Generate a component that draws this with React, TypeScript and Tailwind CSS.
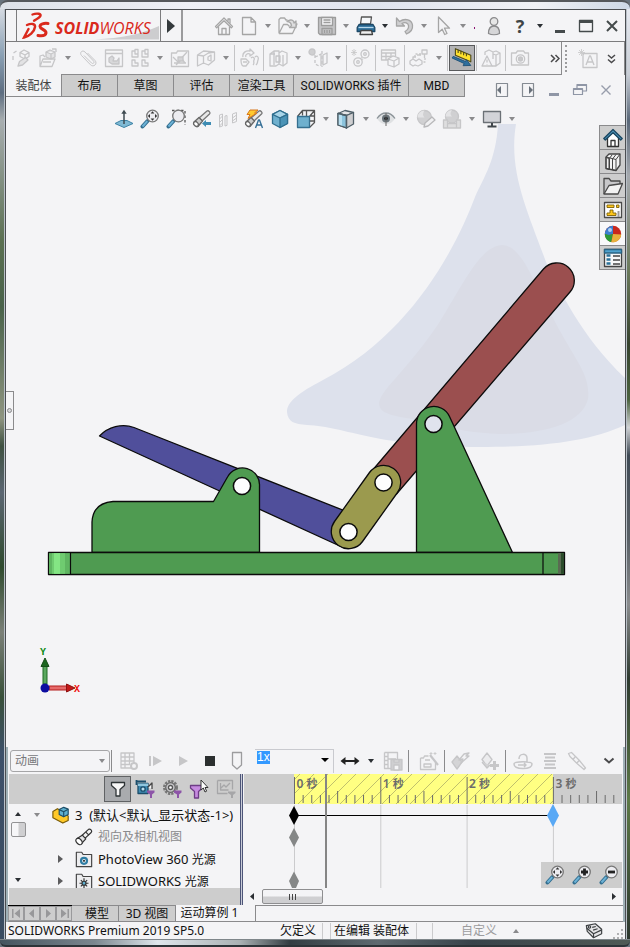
import React from "react";

type IconProps = { className?: string };
type Draw = (p: IconProps) => React.ReactElement;

const LIGHT = "#c6c6c8";

function Svg({
  children,
  w = 20,
  stroke = LIGHT,
  fill = "none",
}: {
  children: React.ReactNode;
  w?: number;
  stroke?: string;
  fill?: string;
}) {
  return (
    <svg
      aria-hidden="true"
      width={w}
      height={w}
      viewBox="0 0 20 20"
      fill={fill}
      stroke={stroke}
      strokeWidth="1.3"
      strokeLinejoin="round"
      className="shrink-0"
    >
      {children}
    </svg>
  );
}

/* ---------- title bar icons ---------- */
const HomeGray: Draw = () => (
  <Svg stroke="#a5a5a5">
    <path d="M1.5 10.500 10 2l8.500 8.500-1.200 1.200L10 4.800l-7.300 6.900z" />
    <path d="M4.500 10.500V18.500h11V10.500M8 18.500v-6h4v6M14 5.500V3h2v4.500" />
  </Svg>
);
const NewDoc: Draw = () => (
  <Svg stroke="#a5a5a5">
    <path d="M3.500 1.500h8.500l4.500 4.500v12.500h-13zM12 1.500V6h4.500" />
  </Svg>
);
const OpenDoc: Draw = () => (
  <Svg stroke="#a9a9a9">
    <path d="M1 17.500V3.500l1.500-1.500h4l1.500 2h1.500M1 17.500 5.500 8.500h4l2 2M1 17.500h13.500L19 8h-2" />
    <path d="M9 5.500c4-3 7-1 7 1.500l2-2v6.500h-6.500l2-2C13 7 11.500 5.500 9 5.500z" fill="#dededf" />
  </Svg>
);
const SaveIcon: Draw = () => (
  <Svg stroke="#9c9c9c">
    <path d="M1.500 1.500h17v17H3l-1.500-1.500z" fill="#c4c4c6" />
    <path d="M4.500 1.500h11v8h-11z" fill="#f4f4f6" />
    <path d="M6.500 4h7M6.500 6.500h7" />
    <path d="M5 12.500h10v6H5zM7.500 14v3M10 14v3M12.500 14v3" />
  </Svg>
);
const PrintIcon: Draw = () => (
  <Svg stroke="#1c4765">
    <path d="M5.500 1h10l-1 7H4.500z" fill="#f6f8fa" stroke="#555" />
    <path d="M3 8.500h14l1.800 3v4H1.200v-4z" fill="#2a6d98" />
    <path d="M2.500 11.500h15" stroke="#b7d7ea" />
    <path d="M5 14.500h10.500l1 4H4z" fill="#f0f0f0" stroke="#444" />
  </Svg>
);
const UndoIcon: Draw = () => (
  <Svg stroke="#a5a5a5">
    <path
      d="M1.500 2v8h8L7 7.500c3-1.800 6-.5 6.500 2 .5 2.500-1 4.500-3.500 6L11.500 18c4.500-2 6.500-5 6-9-.8-5-7-7.500-13-3.500z"
      fill="#cfcfd1"
    />
  </Svg>
);
const CursorIcon: Draw = () => (
  <Svg stroke="#a5a5a5">
    <path d="M4.500 1v15.500l3.700-3.300 2.500 5.300 2.300-1-2.500-5.300h5z" />
  </Svg>
);
const UserIcon: Draw = () => (
  <Svg stroke="#8a8a8c">
    <circle cx="10" cy="5.500" r="3.800" fill="#e6e6e6" />
    <path d="M4.500 17.500c0-5 1.500-7.500 5.500-7.500s5.500 2.500 5.500 7.500c-3 1.500-8 1.500-11 0z" fill="#d6d6d8" />
  </Svg>
);
const MinIcon: Draw = () => (
  <Svg stroke="none" fill="#454b4c">
    <path d="M5 14h10v3H5z" />
  </Svg>
);
const MaxIcon: Draw = () => (
  <Svg stroke="#454b4c">
    <path d="M3.500 4.500h13v11h-13z" />
    <path d="M3 5.500h14" strokeWidth="3" />
  </Svg>
);
const CloseIcon: Draw = () => (
  <Svg stroke="#454b4c">
    <path d="m5 5 10 10M15 5 5 15" strokeWidth="2" />
  </Svg>
);

/* ---------- command manager icons ---------- */
const EditPart: Draw = () => (
  <Svg>
    <path d="M1.500 5l3-2M1 8v4M8 4.500l4-2.500 5 2.500v4l-4 2.500-5-2.500zM8 4.500l5 2.500 4-2.500M13 7v4" />
    <path d="m6 18 1.500-4.500 6-4 2.500 2.500-5.500 5z" fill="#e2e2e4" />
  </Svg>
);
const InsertComp: Draw = () => (
  <Svg>
    <path d="M2 18.500 5 11h12l-3 7.500zM2 18V8l3-1 2 2" />
    <path d="m8 4 4-2 5 2v5l-4 2-5-2zM8 4l5 2 4-2M13 6v5" fill="#e4e4e6" />
    <path d="M5 14h8M14 1h4v3" />
  </Svg>
);
const ClipIcon: Draw = () => (
  <Svg>
    <path
      d="M6 7.500 13.500 15c1.500 1.500 3.500-.5 2-2L7 4C4.500 1.500 1 4.500 3.500 7.500l9 9.300c3 3 7.500-1 4.500-4.300L9.500 5"
      strokeWidth="1"
    />
  </Svg>
);
const WindowMate: Draw = () => (
  <Svg>
    <path d="M1.500 2h17v16.500h-17zM1.500 5.500h17" />
    <path d="M5 10l3-2 2 2-1 3h4l2-3v6H8l-3-2z" fill="#d8d8da" />
  </Svg>
);
const PatternIcon: Draw = () => (
  <Svg>
    <path d="M2 3h3v3h3v3H2zM12 3h3v3h3v3h-6zM2 12h3v3h3v3H2zM12 12h3v3h3v3h-6zM5 3V1.500h3V6M15 3V1.500h3V6" />
  </Svg>
);
const ChartMate: Draw = () => (
  <Svg>
    <path d="M1.500 5h5l1-2h11v15.500h-17z" />
    <path d="m3 9 5 5L17 4M4 15h12M6 17l6-6 3 4" />
    <path d="M8 9h5v4H8z" fill="#d4d4d6" />
  </Svg>
);
const MoveComp: Draw = () => (
  <Svg>
    <path d="m1.500 7 6-4 11 1v8l-6 5-5-2-6 3zM7.500 8v8M1.500 7l6 1 5-3 6-1M12 9l3-2v6l-3-1z" />
  </Svg>
);
const RotateComp: Draw = () => (
  <Svg>
    <path d="M4 9c-1-4 3-7 7-6V1l4 4-4 3V6C8 5 6 7 7 9M2 11h5l3 3-3 4H4c-2-1-2-3-2-7zM4 14h4M12 10c2-2 4 0 3 2s1 3-1 5M16 9c2-2 4 0 3 3s0 3-2 5" />
  </Svg>
);
const AssemblyFeat: Draw = () => (
  <Svg>
    <path d="M2 6l4-3h5v13l-3 2H2zM6 3v14M11 5l3-2 5 2v10l-4 3-4-2M15 7v10M2 6h5M8 8h4v6H8z" />
  </Svg>
);
const RefGeom: Draw = () => (
  <Svg>
    <circle cx="4" cy="4" r="3" fill="#cfcfd1" />
    <path d="M7 7v9l4 2M7 9l5-2M14 3v16" strokeDasharray="3 2" />
    <path d="m11 7 2-1v12M15 7l4-2v10l-4 2z" />
  </Svg>
);
const GearsIcon: Draw = () => (
  <Svg>
    <circle cx="14" cy="6" r="4" />
    <circle cx="14" cy="6" r="1.300" />
    <circle cx="7" cy="14" r="4.200" />
    <circle cx="7" cy="14" r="1.300" />
    <path d="M3 1v7M0 4.500h6M1 2l4 5M5 2 1 7M10 9l2 3" strokeWidth=".8" />
  </Svg>
);
const TableIcon: Draw = () => (
  <Svg>
    <path d="M1.500 2h14v10h-14zM1.500 5h14M1.500 8.500h14M6 5v7M11 5v7" />
    <path d="m8 11 5-3 6 2v6l-5 3-6-2zM8 11l6 2v6M14 13l5-3" fill="#f4f4f6" />
  </Svg>
);
const ExplodeIcon: Draw = () => (
  <Svg>
    <path d="M13 2h5v4h-5zM15.500 6v4M1 13l3-2 3 2 3-2 3 2v3l-4 2-3-1-2 1-3-2zM4 11V9h3M8 7h4" />
    <path d="M6 9V6h6M16 10v4h-3" strokeDasharray="2 1.500" />
  </Svg>
);
const RulerIcon: Draw = () => (
  <Svg w={22} stroke="#4f4a1a">
    <path d="m4 1.500 14 6v6l-14-6z" fill="#ffe12e" strokeWidth="1" />
    <path d="M6.500 2.500v3M9 3.500v3M11.500 4.500v3M14 5.500v3" strokeWidth="1" />
    <path d="m1 10 11 5-1 2 7-.2-4-5.300-.8 1.700L2 8.500z" fill="#2e6f9e" stroke="#1e4e73" strokeWidth=".8" />
  </Svg>
);
const WarnPart: Draw = () => (
  <Svg>
    <path d="M4 7V4l4-2 4 2 3-1 4 2v10l-4 3h-4M12 4v7M15 7v11M12 6l3 1 4-2" />
    <path d="m6 8 5 10H1zM6 11.500v3M6 16v.6" fill="#f4f4f6" />
  </Svg>
);
const CameraIcon: Draw = () => (
  <Svg>
    <path d="M1.500 5H6l1.500-2h6L15 5h3.500v12h-17z" />
    <circle cx="10.500" cy="11" r="4.200" />
    <circle cx="10.500" cy="11" r="2" fill="#c9c9cb" />
  </Svg>
);
const AnnotateIcon: Draw = () => (
  <Svg>
    <path d="M5 4.500h14v14H5zM8 16l3.500-9h1L16 16M9.500 13h5" />
    <path d="M3.500 0v7M0 3.500h7M1 1l5 5M6 1 1 6" strokeWidth=".8" />
  </Svg>
);

/* ---------- document window controls ---------- */
const PaneLeft: Draw = () => (
  <Svg stroke="#858b93">
    <path d="M4.500 3.500h11v13h-11z" strokeWidth="1.200" />
    <path d="M9 6v8l-4-4z" fill="#68707a" stroke="none" />
  </Svg>
);
const PaneRight: Draw = () => (
  <Svg stroke="#858b93">
    <path d="M4.500 3.500h11v13h-11z" strokeWidth="1.200" />
    <path d="M11 6v8l4-4z" fill="#68707a" stroke="none" />
  </Svg>
);
const DocMin: Draw = () => (
  <Svg stroke="none" fill="#8f96a6">
    <path d="M5 13h10v3H5z" />
  </Svg>
);
const DocRestore: Draw = () => (
  <Svg stroke="#8f96a6">
    <path d="M3.500 8.500h9v6h-9zM3.500 9.500h9M7 8V4.500h9.500V11H13M7 5.500h9" strokeWidth="1.200" />
  </Svg>
);
const DocClose: Draw = () => (
  <Svg stroke="#979dab">
    <path d="m5.500 5.500 9 9M14.500 5.500l-9 9" strokeWidth="1.400" />
  </Svg>
);

/* ---------- heads-up view icons ---------- */
const NormalTo: Draw = () => (
  <Svg stroke="#3d83a6">
    <path d="m1 14.500 6-3h6l6 3-9 4z" fill="#7fb9d4" strokeWidth="1" />
    <path d="M10 15V3" stroke="#3e4a50" strokeWidth="1.500" />
    <path d="M7.300 4.800 10 .8l2.700 4z" fill="#3e4a50" stroke="none" />
  </Svg>
);
function Lens({ children, dash }: { children?: React.ReactNode; dash?: boolean }) {
  return (
    <Svg stroke="#555">
      {dash && <path d="M6 1.500h13V16" strokeDasharray="2.500 2" stroke="#555" />}
      <path d="m2.500 17.500 5-5.500" stroke="#346f90" strokeWidth="4" strokeLinecap="round" />
      <path d="m2.500 17.500 4.800-5.300" stroke="#6cb2d6" strokeWidth="2" />
      <circle cx="12.500" cy="7" r="5.800" fill="#ececf0" stroke="#777" />
      {children}
    </Svg>
  );
}
const ZoomFit: Draw = () => (
  <Lens>
    <path
      d="m12.500 2.300 1.900 2.200h-3.800zM12.500 11.700l1.900-2.200h-3.800zM7.800 7 10 5.100v3.800zM17.200 7 15 5.100v3.800z"
      fill="#333"
      stroke="none"
    />
  </Lens>
);
const ZoomArea: Draw = () => <Lens dash />;
const ZoomIn: Draw = () => (
  <Lens>
    <path d="M12.500 3.500v7M9 7h7" stroke="#222" strokeWidth="2.800" />
  </Lens>
);
const ZoomOut: Draw = () => (
  <Lens>
    <path d="M9 7h7" stroke="#222" strokeWidth="2.800" />
  </Lens>
);
const Scope = () => (
  <>
    <path d="m7 9 8-7c1.500-1 4 1.500 2.500 3L10 12z" fill="#e8e8e8" stroke="#777" />
    <path d="m2 13 5-4.500 3.500 3.500L6 17.500c-2 1-5-2-4-4.500z" fill="#ccc" stroke="#666" />
    <ellipse cx="4" cy="15" rx="2" ry="2.600" transform="rotate(-45 4 15)" fill="#fff" stroke="#666" />
  </>
);
const PrevView: Draw = () => (
  <Svg>
    <Scope />
    <path d="m10 14.500 4-3.500v2h5v3h-5v2z" fill="#3e8cb3" stroke="none" />
  </Svg>
);
const SectionView: Draw = () => (
  <Svg>
    <path
      d="M1.500 6l3-1v12l-3 1zM1.500 10l3-3M1.500 13.500l3-3M1.500 17l3-3M7 7v10l2-.6V6.500zM14.500 5l4-1.500v9l-4 1.500zM14.500 9l4-3M14.500 12l4-3"
      strokeWidth="1"
    />
  </Svg>
);
const Dynamic: Draw = () => (
  <Svg>
    <Scope />
    <path d="M6 1h8l-3.500 3H13L4 9.500 6 5.500H3z" fill="#ffc92e" stroke="#d7771c" strokeWidth="1" />
    <path d="m11.500 19 3-8h1l3 8M12.800 16h4.500" stroke="#356f96" strokeWidth="1.400" />
  </Svg>
);
const CubeIcon: Draw = () => (
  <Svg stroke="#2f6f8f">
    <path d="m10 1.500 7.500 3.800v9.200L10 18.500l-7.500-4V5.300z" fill="#6fb0ce" />
    <path d="m10 1.500 7.500 3.800L10 9 2.500 5.300z" fill="#a9d5e8" />
    <path d="M10 9v9.500l7.500-4V5.300z" fill="#4b93b6" />
  </Svg>
);
const ViewOrient: Draw = () => (
  <Svg stroke="#555">
    <path d="m1.500 7.500 5-6h12v12l-5 5M13.500 7.500l5-6M6.500 1.500v5M10.500 1.500V7M18 7h-4M18 12h-4" />
    <path d="M1.500 7.500h12v11h-12z" fill="#6fb0ce" stroke="#356f8f" />
  </Svg>
);
const DisplayStyle: Draw = () => (
  <Svg stroke="#4f5f68">
    <path d="m2 4.500 7-3 8.500 2-7 3z" fill="#e4e4e6" />
    <path d="m2 4.500 8.500 2v12.500L2 16z" fill="#8cc4dd" />
    <path d="m2 4.500 4 1v12L2 16z" fill="#b8dff0" stroke="none" />
    <path d="m10.500 6.500 7-3V15l-7 4z" fill="#cfcfd1" />
    <path d="m2 4.500 8.500 2v12.500L2 16z" />
  </Svg>
);
const EyeIcon: Draw = () => (
  <Svg stroke="#8b9398">
    <path d="M1 9.500C4 5 6.500 4 10 4s6 1 9 5.500c-3 4.500-5.500 5.500-9 5.500S4 14 1 9.500z" fill="#dfe1e3" stroke="none" />
    <path d="M1 9.500C4 5 6.500 4 10 4s6 1 9 5.500" />
    <circle cx="10" cy="9.500" r="4" fill="#6b757b" stroke="none" />
    <circle cx="10" cy="9.500" r="1.800" fill="#15191c" stroke="none" />
    <path d="M10 4v13" stroke="#666" strokeWidth="1" />
  </Svg>
);
const BallPencil: Draw = () => (
  <Svg>
    <circle cx="8.500" cy="8.500" r="7" fill="#d0d0d2" />
    <path d="M8.500 1.500c-2 3-2 5 0 7H1.500a7 7 0 0 1 7-7z" fill="#e4e4e6" stroke="none" />
    <path d="m8 18 1-4 7-6 3 3-7 6z" fill="#f0f0f2" stroke="#b8b8ba" />
  </Svg>
);
const BallScene: Draw = () => (
  <Svg>
    <circle cx="10" cy="7.500" r="6.500" fill="#d0d0d2" />
    <path d="M10 1c-2 3-2 4.500 0 6.500H3.500A6.500 6.500 0 0 1 10 1z" fill="#e4e4e6" stroke="none" />
    <path d="M1.500 11h4v8h-4zM14.500 11h4v8h-4zM5.500 14.500h9V19h-9z" fill="#dededf" />
  </Svg>
);
const MonitorIcon: Draw = () => (
  <Svg stroke="#6b7076">
    <path d="M1.500 2.500h17v11h-17z" fill="#d2d3d8" />
    <path d="M10 14v3M5.500 17.500h9" stroke="#40464b" strokeWidth="2" />
  </Svg>
);

/* ---------- task pane icons ---------- */
const TaskHome: Draw = () => (
  <Svg stroke="#333">
    <path d="M4.500 9v9.500h11V9L10 4z" fill="#fff" />
    <path d="M8 18.500v-6h4v6" />
    <path d="M.8 10.500 10 1.500l9.200 9-1.500 1.500L10 4.800 2.300 12z" fill="#4a92b8" stroke="#1b4660" />
  </Svg>
);
const TaskLibrary: Draw = () => (
  <Svg stroke="#444">
    <path d="m3 5 3-3 11 0v11l-4 5.500-10-2z" fill="#f2f2f2" />
    <path
      d="M3 5v11.500l3 1V7zM6 7l3-4M6.500 7v10.500M9.500 7v11l3.500.5V7.500L17 2M9.500 7l3.500-4.500M3 5l10 2.500"
      strokeWidth="1"
    />
  </Svg>
);
const TaskFolder: Draw = () => (
  <Svg stroke="#4a4a4a">
    <path d="M1 18V2.500h5L8 5h9v3" fill="#c8c8ca" />
    <path d="M1 18 6 9.500l13.500-2L15 18z" fill="#f2f2f2" />
  </Svg>
);
const TaskPalette: Draw = () => (
  <Svg stroke="#4a4a4a">
    <path d="M1.500 2.500h17v15h-17z" fill="#fff" />
    <path d="M4 5h7v2.500H4zM13.500 5H16v2.500h-2.500zM7 10h3v3h3v2.500H4V13h3z" fill="#ffc61a" stroke="#7d6208" strokeWidth=".9" />
    <path d="M14.500 11h2v6h-2z" fill="#9a9a9c" stroke="none" />
  </Svg>
);
const TaskBall: Draw = () => (
  <Svg stroke="none">
    <circle cx="10" cy="10" r="8.200" fill="#c9281e" />
    <path d="M10 10V1.800A8.200 8.200 0 0 0 1.800 10L5 11.500z" fill="#3c7fd0" />
    <path d="M1.800 10c0 4 2.500 7.200 6.500 8.200L10 10l-4 1z" fill="#2c9a38" />
    <path d="M8.300 18.200c5 1 9.700-3 9.900-7.700L10 10z" fill="#e8b13c" />
    <circle cx="7" cy="6" r="2" fill="#cfe4fa" opacity=".8" />
  </Svg>
);
const TaskProps: Draw = () => (
  <Svg stroke="#444">
    <path d="M1.500 1.500h17v17h-17z" fill="#f8f8f8" />
    <path d="M1.500 1.500h17V5h-17z" fill="#4fa3cf" stroke="#2a6383" />
    <path d="M3.500 7.500h4M3.500 11.500h4M3.500 15.500h4" stroke="#2a7199" strokeWidth="2.400" />
    <path d="M10 8h7M10 12h7M10 16h7" />
  </Svg>
);

/* ---------- motion manager icons ---------- */
const CalcIcon: Draw = () => (
  <Svg>
    <path d="M2 2h13v15H2zM2 6h13M2 10h13M2 13.500h9M6 2v15M10.500 2v12" />
    <circle cx="15" cy="15" r="3" fill="#f4f4f6" strokeWidth="2" />
  </Svg>
);
const PlayStart: Draw = () => (
  <Svg stroke="none" fill="#c6c6c8">
    <path d="M3 5h2v10H3zM7 5l9 5-9 5z" />
  </Svg>
);
const PlayIcon: Draw = () => (
  <Svg stroke="none" fill="#c6c6c8">
    <path d="m6 5 9 5-9 5z" />
  </Svg>
);
const StopIcon: Draw = () => (
  <Svg stroke="none" fill="#2b2f2f">
    <path d="M5 5h10v10H5z" />
  </Svg>
);
const SliderKnob: Draw = () => (
  <Svg stroke="#9c9c9e">
    <path d="M5.500 1.500h9V14L10 18l-4.500-4z" />
  </Svg>
);
const LoopArrow: Draw = () => (
  <Svg stroke="#222">
    <path d="M3 10h14" strokeWidth="2" />
    <path d="M.5 10 5.500 6v8zM19.500 10l-5-4v8z" fill="#222" stroke="none" />
  </Svg>
);
const SaveAnim: Draw = () => (
  <Svg>
    <path d="M1.500 1.500h13V8M1.500 1.500v16H8M5 1.500v16M1.500 5.500H5M1.500 9.500H5M1.500 13.500H5M5 8h8" />
    <path d="M8 8.500h11V19H8z" fill="#cfcfd1" />
    <path d="M11 14h5v5h-5zM11 9h5v2h-5z" fill="#f4f4f6" />
  </Svg>
);
const WizardIcon: Draw = () => (
  <Svg>
    <path d="M1.500 7V18.500h15V11M1.500 7h3l1-2h4M5 13h7v3H5zM6 9h5" />
    <path d="M12 1v3M10.500 2.500h3M16 1v3M14.500 2.500h3" strokeWidth=".8" />
    <path d="m11 4 8 10" strokeWidth="2.200" />
  </Svg>
);
const KeyAuto: Draw = () => (
  <Svg>
    <path d="m6 5 5 6-5 7-5-7z" fill="#d4d4d6" />
    <path d="m8 9 5-6 5-1-3 3h3l-8 7 2-4z" fill="#f4f4f6" />
  </Svg>
);
const KeyAdd: Draw = () => (
  <Svg>
    <path d="m7 2 5 6.500L7 15 2 8.500z" fill="#ececee" />
    <path d="M2 11l5 6 3-3" fill="#d4d4d6" />
    <path d="M14.500 10v9M10 14.500h9" strokeWidth="3" />
  </Svg>
);
const MotorIcon: Draw = () => (
  <Svg>
    <path d="M1 13c0-3 18-3 18 0s-2 4.500-9 4.500S1 16 1 13zM5 14h8l-2-2M13 14l-2 2M6 8c0-6 8-6 8-1v4" strokeWidth="1.500" />
  </Svg>
);
const SpringIcon: Draw = () => (
  <Svg>
    <path d="M4 3h12M5 6.500h10M4 10h12M5 13.500h10M4 17h12" strokeWidth="2" />
  </Svg>
);
const DamperIcon: Draw = () => (
  <Svg>
    <path d="m1.500 2.500 3-1L12 9l6.500 8-1.500 1.500L9.500 12 3 5.500zM8 6 6 8.500M12 9.500 10 12" />
  </Svg>
);
const FunnelActive: Draw = () => (
  <Svg stroke="#2e3436">
    <path d="M3.500 3.500h13v3l-4.500 4V17H8v-6.500l-4.500-4z" fill="#f6f6f6" />
  </Svg>
);
const Funnel = () => (
  <path d="M12 11.500h7.500v2l-2.500 2V19h-2v-3.500l-3-2z" fill="#8d55a8" stroke="none" />
);
const FilterAnim: Draw = () => (
  <Svg stroke="#1c4e6b">
    <path d="M3 4.500h10v10H3z" fill="#3f8cb3" />
    <path d="M3 4.500h10v2.500H3z" fill="#8fc6de" stroke="none" />
    <path d="M13 8l4-4v6" fill="#f4f4f6" stroke="#444" />
    <circle cx="8" cy="10" r="2.200" fill="#b9deef" />
    <path d="M1.500 1v5M1 2.500h10" stroke="#1c4e6b" strokeWidth="1.800" />
    <Funnel />
  </Svg>
);
const FilterDrive: Draw = () => (
  <Svg stroke="#777">
    <circle cx="8.500" cy="8.500" r="6.300" strokeWidth="2.400" strokeDasharray="2.300 1" />
    <circle cx="8.500" cy="8.500" r="4.800" fill="#c4c4c6" stroke="#666" />
    <circle cx="8.500" cy="8.500" r="2" fill="#fff" stroke="#555" />
    <Funnel />
  </Svg>
);
const FilterSelected: Draw = () => (
  <Svg stroke="#6e3d86">
    <path d="M1.500 6.500h12v2.500l-4 3.500V19h-4v-6.500l-4-3.500z" fill="#c68be0" />
    <path d="M12 1v10l2.300-2 1.700 4 1.600-.8L16 8.500h3z" fill="#fff" stroke="#333" strokeWidth="1" />
  </Svg>
);
const FilterResults: Draw = () => (
  <Svg stroke="#a6a6a8">
    <path d="M1.500 1.500h15v9M1.500 1.500v13h10M4.500 4v7h8M5 9l3-3 2 2 4-4" />
    <path d="M12 12.500h7.500v1.500l-2.500 2v3h-2v-3l-3-2z" fill="#a6a6a8" stroke="none" />
  </Svg>
);

/* ---------- tree icons ---------- */
const AssemblyIcon: Draw = () => (
  <Svg stroke="#7a5c08" w={18}>
    <path d="m1 6 5-3 4 2v5l5-1 3 2v5l-6 3-11-6z" fill="#ffc928" />
    <path d="m8 4 5-2.500 5 2v6L13 12l-5-2.500z" fill="#5fb0d0" stroke="#1e4f68" />
    <path d="M8 4l5 2.300L18 3.500M13 6.300V12" stroke="#1e4f68" />
  </Svg>
);
const ScopeIcon: Draw = () => (
  <Svg stroke="#333" w={18}>
    <path d="m8 8 7-6.500c2-1 4.500 1.500 3 3.500l-7 6.500z" fill="#f2f2f2" />
    <path d="m2 12 6-4 4 4-5 5.500" fill="#e4e4e6" />
    <ellipse cx="4.500" cy="15" rx="2.800" ry="4" transform="rotate(-45 4.500 15)" fill="#fff" />
    <path d="m12 4.500 3.500 3.500" />
  </Svg>
);
function FolderBox({ children }: { children: React.ReactNode }) {
  return (
    <Svg stroke="#444" w={18}>
      <path d="M1.500 18.500V2.500h6L9 5h9.500v13.500z" fill="#ededef" />
      {children}
    </Svg>
  );
}
const PhotoFolder: Draw = () => (
  <FolderBox>
    <circle cx="10" cy="12" r="3.300" fill="#fff" stroke="#2e7ca3" strokeWidth="2.500" />
    <circle cx="10" cy="12" r="1.200" fill="#333" stroke="none" />
  </FolderBox>
);
const LightFolder: Draw = () => (
  <FolderBox>
    <path d="M10 7v11M5 12.500h10M6.500 9l7 7M13.500 9l-7 7" stroke="#333" />
    <circle cx="10" cy="12.500" r="2.200" fill="#5fb0d0" stroke="#333" />
  </FolderBox>
);
const TagIcon: Draw = () => (
  <Svg stroke="#3d4043" w={18}>
    <path d="m1.500 4 10-2 7 6v5l-9 4.500-7-7z" fill="#e4e4e6" />
    <path d="m2 7 7.500 6L18 9M9.500 13v4" />
    <circle cx="5" cy="5.500" r="1.300" />
    <path d="m8 6 4-1M9 9l5-1.500" />
  </Svg>
);

/* ---------- small parts ---------- */
function Caret({ dark, up }: { dark?: boolean; up?: boolean }) {
  return (
    <span className="flex w-[14px] shrink-0 items-center justify-center">
      <svg aria-hidden="true" width="6" height="4" viewBox="0 0 6 4" fill={dark ? "#2b2f33" : "#8a8a8c"}>
        <path d={up ? "M0 4h6L3 0z" : "M0 0h6L3 4z"} />
      </svg>
    </span>
  );
}
function Tool({ icon: I, label, w = "w-[26px]" }: { icon: Draw; label: string; w?: string }) {
  return (
    <button aria-label={label} className={`flex h-full shrink-0 items-center justify-center ${w}`}>
      <I />
    </button>
  );
}
const Sep = () => <span className="mx-px h-[26px] w-px shrink-0 self-center bg-[#c4c4c6]" />;

function TitleBar() {
  return (
    <header className="flex h-8 items-stretch border-b border-[#7c7c7e]">
      <div className="w-[11px] border-r border-[#7c7c7e]" />
      <div className="relative flex w-36 items-center border-r border-[#7c7c7e] pl-[5px]">
        <svg aria-hidden="true" viewBox="0 0 143 31" className="absolute inset-0 h-full w-full">
          <path d="M78 29.500C105 28 125 24 142 16v13.500z" fill="#cdcdcf" />
        </svg>
        <svg aria-hidden="true" width="28" height="28" viewBox="0 0 28 28" className="relative shrink-0" fill="none" stroke="#da291c" strokeLinecap="round">
          <path d="M10.500 2.500c4-1.500 9-1 8 1.200-.8 1.800-3.500 3.300-6.500 5" strokeWidth="2.400" />
          <path d="M5 13c4-1.800 8.500-1.500 8 2C12.500 19.500 7 24.500 2 25.500L6.500 17" strokeWidth="2.400" />
          <path d="M26 11.500c-4-.5-8 .5-8 3s6.500 3.500 6 6.500c-.4 2.600-4.500 3-8 2.500" strokeWidth="3" />
        </svg>
        <span className="relative mt-1 ml-[5px] whitespace-nowrap font-['Open_Sans',sans-serif] text-base leading-5 font-bold text-[#da291c] italic">
          SOLID<span className="font-normal">WORKS</span>
        </span>
      </div>
      <button aria-label="展开菜单" className="flex w-[22px] shrink-0 items-center justify-center border-r-2 border-[#9a9a9c]">
        <svg aria-hidden="true" width="8" height="14" viewBox="0 0 8 14" fill="#343a3c">
          <path d="M0 0v14l8-7z" />
        </svg>
      </button>
      <nav aria-label="标准工具" className="ml-7 flex flex-1 items-center">
        <Tool icon={HomeGray} label="主页" w="w-[25px]" />
        <Tool icon={NewDoc} label="新建" w="w-[25px]" />
        <Caret />
        <Tool icon={OpenDoc} label="打开" w="w-[25px]" />
        <Caret />
        <Tool icon={SaveIcon} label="保存" w="w-[25px]" />
        <Caret />
        <Tool icon={PrintIcon} label="打印" w="w-[25px]" />
        <Caret dark />
        <Tool icon={UndoIcon} label="撤销" w="w-[25px]" />
        <Caret />
        <Tool icon={CursorIcon} label="选择" w="w-[25px]" />
        <Caret />
        <span className="mx-1 mt-1 h-0.5 w-px bg-[#8a1070]" />
      </nav>
      <div className="flex items-center">
        <Tool icon={UserIcon} label="登录" />
        <button aria-label="帮助" className="w-[26px] font-['Open_Sans',sans-serif] text-lg leading-5 font-bold text-[#3f4546]">
          ?
        </button>
        <Caret dark />
        <Tool icon={MinIcon} label="最小化" />
        <Tool icon={MaxIcon} label="最大化" />
        <Tool icon={CloseIcon} label="关闭" />
      </div>
    </header>
  );
}

function CommandBar() {
  return (
    <div className="flex h-[33px] items-stretch">
      <div className="flex flex-1 items-center border-r border-b border-[#8a8a8c] pl-[3px]">
        <Tool icon={EditPart} label="编辑零部件" />
        <Tool icon={InsertComp} label="插入零部件" />
        <Caret />
        <Tool icon={ClipIcon} label="配合" />
        <Tool icon={WindowMate} label="零部件预览" />
        <Tool icon={PatternIcon} label="线性阵列" />
        <Caret />
        <Tool icon={ChartMate} label="智能扣件" />
        <Tool icon={MoveComp} label="移动零部件" />
        <Caret />
        <Sep />
        <Tool icon={RotateComp} label="显示隐藏" />
        <Sep />
        <Tool icon={AssemblyFeat} label="装配体特征" />
        <Caret />
        <Tool icon={RefGeom} label="参考几何体" />
        <Caret />
        <Sep />
        <Tool icon={GearsIcon} label="新建运动算例" />
        <Sep />
        <Tool icon={TableIcon} label="材料明细表" />
        <Sep />
        <Tool icon={ExplodeIcon} label="爆炸视图" />
        <Caret />
        <Sep />
        <button aria-label="Instant3D" aria-pressed="true" className="flex h-[26px] w-[26px] shrink-0 items-center justify-center border border-[#58595b] bg-[#b3b3b5]">
          <RulerIcon />
        </button>
        <Sep />
        <Tool icon={WarnPart} label="更新" />
        <Sep />
        <Tool icon={CameraIcon} label="快照" />
        <button aria-label="更多" className="ml-auto flex w-3 items-center justify-center">
          <svg aria-hidden="true" width="10" height="9" viewBox="0 0 10 9" fill="none" stroke="#4a4a4c" strokeWidth="1.500">
            <path d="m1 1 3.500 3.500L1 8M5.500 1 9 4.500 5.500 8" />
          </svg>
        </button>
      </div>
      <div className="flex w-[63px] items-center border-r border-[#8a8a8c]">
        <span className="ml-[3px] h-[27px] w-0 border-l-2 border-dotted border-[#9c9c9e]" />
        <span className="ml-2">
          <Tool icon={AnnotateIcon} label="注释" />
        </span>
        <button aria-label="展开" className="ml-1 flex w-3 items-center justify-center">
          <svg aria-hidden="true" width="9" height="10" viewBox="0 0 9 10" fill="none" stroke="#4a4a4c" strokeWidth="1.500">
            <path d="M1 1l3.500 3L8 1M1 5.500l3.500 3 3.500-3" />
          </svg>
        </button>
      </div>
    </div>
  );
}

const inactiveTab = "border-l border-b border-[#8a8a8c] bg-[#cdcdcd]";
const TABS = [
  { name: "装配体", cls: "w-[55px] relative -mt-px border-b border-[#8a8a8c] bg-[#f4f4f6] text-[#444]" },
  { name: "布局", cls: `w-14 ${inactiveTab}` },
  { name: "草图", cls: `w-14 ${inactiveTab}` },
  { name: "评估", cls: `w-14 ${inactiveTab}` },
  { name: "渲染工具", cls: `w-16 ${inactiveTab}` },
  { name: "SOLIDWORKS 插件", cls: `w-[115px] ${inactiveTab}` },
  { name: "MBD", cls: `w-[57px] border-r ${inactiveTab}` },
];

function TabRow() {
  return (
    <div className="flex h-[22px] items-stretch">
      <div role="tablist" className="flex">
        {TABS.map((t, i) => (
          <button
            key={t.name}
            role="tab"
            aria-selected={i === 0}
            className={`pt-px font-['Roboto','Noto_Sans_CJK_SC',sans-serif] text-xs whitespace-nowrap ${t.cls}`}
          >
            {t.name}
          </button>
        ))}
      </div>
      <div className="mt-2 mr-[6px] ml-auto flex items-center">
        <Tool icon={PaneLeft} label="左窗格" />
        <Tool icon={PaneRight} label="右窗格" />
        <Tool icon={DocMin} label="最小化文档" />
        <Tool icon={DocRestore} label="还原文档" />
        <Tool icon={DocClose} label="关闭文档" />
      </div>
    </div>
  );
}

function Model() {
  return (
    <svg role="img" aria-label="夹具机构装配模型" viewBox="6 97 619 650" className="absolute inset-0 h-full w-full">
      <path
        d="M498 124C496 160 484 177 475 197 455 250 410 335 323 380 298 393 287 402 287 412c1 10 7 12 20 13 40 2 70 22 173 22 65 0 110-6 145-22v-47C580 335 560 290 546 262 528 212 508 172 516 124z"
        fill="#dde1ec"
      />
      <path
        d="M503 245c22 3 30 40 65 100 14 24 22 35 20 54-6 24-42 35-88 35-50-2-75-14-100-17-14-3-21-6-21-14 3-15 26-30 60-80 26-42 42-78 64-78z"
        fill="#dadce6"
      />
      <g stroke="#0b0b0b" strokeWidth="1.300" strokeLinejoin="round">
        <path d="M371 472 543.500 269A17.500 17.500 0 0 1 570 292L396.500 494A17.500 17.500 0 0 1 371 472z" fill="#9b4f4f" />
        <path d="M99.500 436C108 427 122 423 134 427.500L354 514.500 342 547z" fill="#504f9b" />
        <path d="M92 552.500V522Q93 503 113 501.500H213.500L227.500 477A17 17 0 0 1 259.500 486v66.500z" fill="#4f9b51" />
        <path d="M416.500 552.500V423.500a17.300 17.300 0 0 1 33-7L512.500 552.500z" fill="#4f9b51" />
        <path d="M369.500 472.500A17 17 0 0 1 397.500 492.500L362.500 541.500A17 17 0 0 1 334.500 521.500z" fill="#9b9a4e" />
        <g fill="#fdfdfe" strokeWidth="1.500">
          <circle cx="242" cy="486" r="8.600" />
          <circle cx="348.500" cy="532" r="8.600" />
          <circle cx="383.500" cy="482.500" r="8.600" />
          <circle cx="433.500" cy="424" r="8.600" fill="#e0e3ed" />
        </g>
        <path d="M48.500 552.500h516v22h-516z" fill="#4f9b51" />
      </g>
      <path d="M49 553.200h21v20.600H49z" fill="#5fb561" />
      <path d="M52 553.200h13v20.600H52z" fill="#6fcb70" />
      <path d="M54 553.200h6v20.600h-6z" fill="#84e584" />
      <path d="M558 553.200h3v20.600h-3z" fill="#5a6a52" />
      <path d="M561 553.200h3v20.600h-3z" fill="#2b4b2b" />
      <path d="M70.500 553v21M543 553v21" stroke="#0b0b0b" strokeWidth="1.200" />

      <path d="M43 684V666h4v18z" fill="#5aa85e" stroke="#1e6b22" />
      <path d="M41 666.500 45 658l4 8.500z" fill="#1c661f" stroke="#154d17" />
      <path d="M49 686h18v4H49z" fill="#e66a6a" stroke="#b31d1d" />
      <path d="M66.500 684 75 688l-8.500 4z" fill="#c41818" stroke="#8e1212" />
      <circle cx="45" cy="688" r="4.500" fill="#0c0ca0" />
      <g className="font-['Liberation_Mono',monospace] text-[10px] font-bold">
        <text x="40" y="655" fill="#0a8a10">Y</text>
        <text x="74" y="692" fill="#f01010">X</text>
      </g>
    </svg>
  );
}

const TASKS: { icon: Draw; label: string; cls: string }[] = [
  { icon: TaskHome, label: "SOLIDWORKS 资源", cls: "bg-[#cdcdcd]" },
  { icon: TaskLibrary, label: "设计库", cls: "bg-[#cdcdcd]" },
  { icon: TaskFolder, label: "文件探索器", cls: "bg-[#cdcdcd]" },
  { icon: TaskPalette, label: "视图调色板", cls: "bg-[#cdcdcd]" },
  { icon: TaskBall, label: "外观", cls: "bg-[#f8f8fa]" },
  { icon: TaskProps, label: "自定义属性", cls: "bg-[#cdcdcd]" },
];

function Viewport() {
  return (
    <main className="relative min-h-[500px] flex-1 overflow-hidden">
      <Model />
      <div className="relative flex h-11 items-center pl-[105px]">
        <Tool icon={NormalTo} label="正视于" />
        <Tool icon={ZoomFit} label="整屏显示全图" />
        <Tool icon={ZoomArea} label="局部放大" />
        <Tool icon={PrevView} label="上一视图" />
        <Tool icon={SectionView} label="剖面视图" />
        <Tool icon={Dynamic} label="动态注解视图" />
        <Tool icon={CubeIcon} label="等轴测" />
        <Tool icon={ViewOrient} label="视图定向" />
        <Caret />
        <Tool icon={DisplayStyle} label="显示样式" />
        <Caret />
        <Tool icon={EyeIcon} label="隐藏项目" />
        <Caret />
        <Tool icon={BallPencil} label="编辑外观" />
        <Tool icon={BallScene} label="应用布景" />
        <Caret />
        <Tool icon={MonitorIcon} label="视图设定" />
        <Caret />
      </div>
      <button aria-label="展开特征树" className="absolute top-[294px] left-0 flex h-[39px] w-2 items-center justify-center border border-l-0 border-[#8a8a8c]">
        <span className="h-[5px] w-[5px] rounded-full border border-[#8a8a8c] bg-[#d8d8da]" />
      </button>
      <aside className="absolute top-7 right-0 w-[26px] border-t border-l border-[#8a8a8c]">
        {TASKS.map((t) => (
          <button key={t.label} aria-label={t.label} className={`flex h-6 w-full items-center justify-center border-b border-[#8a8a8c] ${t.cls}`}>
            <t.icon />
          </button>
        ))}
      </aside>
    </main>
  );
}

const TallSep = () => <span className="mx-px h-[22px] w-px shrink-0 bg-[#8a8a8c]" />;

function MotionToolbar() {
  return (
    <div className="flex h-[27px] items-center pl-[2px]">
      <div className="relative w-[100px]">
        <select
          aria-label="算例类型"
          className="block h-[22px] w-full appearance-none rounded-[3px] border border-[#a5a5a7] bg-[#f4f4f6] pl-1 text-xs text-[#77777a]"
        >
          <option>动画</option>
        </select>
        <span className="pointer-events-none absolute top-[9px] right-px">
          <Caret />
        </span>
      </div>
      <TallSep />
      <span className="w-0.5" />
      <Tool icon={CalcIcon} label="计算" w="w-[27px]" />
      <Tool icon={PlayStart} label="从头播放" w="w-[27px]" />
      <Tool icon={PlayIcon} label="播放" w="w-[27px]" />
      <Tool icon={StopIcon} label="停止" w="w-[27px]" />
      <Tool icon={SliderKnob} label="进度" w="w-[27px]" />
      <div className="ml-[5px] flex h-[24px] w-[79px] items-start border-t border-r border-[#c9cacf] pl-[2px]">
        <input
          aria-label="播放速度"
          defaultValue="1x"
          className="mt-px h-[13px] w-[13px] bg-[#3399ff] p-0 font-['Liberation_Sans',sans-serif] text-xs leading-3 text-white"
        />
        <button aria-label="选择速度" className="mr-1 ml-auto flex h-5 items-center">
          <svg aria-hidden="true" width="8" height="4" viewBox="0 0 8 4">
            <path d="M0 0h8L4 4z" />
          </svg>
        </button>
      </div>
      <Tool icon={LoopArrow} label="播放模式" w="w-[32px]" />
      <span className="-ml-0.5">
        <Caret dark />
      </span>
      <Tool icon={SaveAnim} label="保存动画" w="w-[29px]" />
      <TallSep />
      <span className="w-1" />
      <Tool icon={WizardIcon} label="动画向导" w="w-[29px]" />
      <TallSep />
      <Tool icon={KeyAuto} label="自动键码" w="w-[30px]" />
      <Tool icon={KeyAdd} label="添加键码" w="w-[28px]" />
      <TallSep />
      <span className="w-0.5" />
      <Tool icon={MotorIcon} label="马达" w="w-[27px]" />
      <Tool icon={SpringIcon} label="弹簧" w="w-[27px]" />
      <Tool icon={DamperIcon} label="阻尼" w="w-[27px]" />
      <button aria-label="折叠" className="mr-2 ml-auto">
        <svg aria-hidden="true" width="12" height="8" viewBox="0 0 12 8" fill="none" stroke="#4a4a4c" strokeWidth="2">
          <path d="m1.500 1.500 4.500 4 4.500-4" />
        </svg>
      </button>
    </div>
  );
}

function Expander() {
  return (
    <svg aria-hidden="true" width="5" height="8" viewBox="0 0 5 8" fill="#5c5c5e" className="shrink-0">
      <path d="M0 0v8l5-4z" />
    </svg>
  );
}

function MotionTree() {
  return (
    <section aria-label="运动树" className="ml-px w-[231px] shrink-0">
      <div className="flex h-[30px] items-center justify-end bg-[#cdcdcd] pr-px">
        <button aria-label="无过滤" aria-pressed="true" className="flex h-[26px] w-[27px] items-center justify-center border border-[#606264] bg-[#a9abae]">
          <FunnelActive />
        </button>
        <Tool icon={FilterAnim} label="过滤动画" w="w-[27px]" />
        <Tool icon={FilterDrive} label="过滤驱动" w="w-[27px]" />
        <Tool icon={FilterSelected} label="过滤选定" w="w-[27px]" />
        <Tool icon={FilterResults} label="过滤结果" w="w-[27px]" />
      </div>
      <div className="flex h-[84px] overflow-hidden">
        <div className="flex w-[18px] shrink-0 flex-col items-center pt-2 pb-1.5">
          <Caret dark up />
          <span className="mt-[6px] h-[15px] w-[15px] rounded-[2px] border border-[#939395] bg-linear-to-r from-[#f6f6f8] from-45% to-[#cfcfd1] to-55%" />
          <span className="mt-auto">
            <Caret dark />
          </span>
        </div>
        <ul className="text-[13px] leading-[22px] whitespace-nowrap">
          <li className="flex h-[22px] items-center pl-[3px]">
            <Caret />
            <span className="ml-2 flex w-[23px]">
              <AssemblyIcon />
            </span>
            <span className="whitespace-pre">3  (默认&lt;默认_显示状态-1&gt;)</span>
          </li>
          <li className="flex h-[22px] items-center pl-12 text-xs text-[#8a8a8c]">
            <span className="flex w-[23px]">
              <ScopeIcon />
            </span>
            视向及相机视图
          </li>
          <li className="flex h-[22px] items-center pl-[31px]">
            <Expander />
            <span className="ml-3 flex w-[23px]">
              <PhotoFolder />
            </span>
            <span>
              PhotoView 360 <span className="text-xs">光源</span>
            </span>
          </li>
          <li className="flex h-[22px] items-center pl-[31px]">
            <Expander />
            <span className="ml-3 flex w-[23px]">
              <LightFolder />
            </span>
            <span>
              SOLIDWORKS <span className="text-xs">光源</span>
            </span>
          </li>
        </ul>
      </div>
      <div className="h-[17px] bg-[#cdcdcd]" />
    </section>
  );
}

const SECONDS = [0, 1, 2, 3];
const TICKS = Array.from({ length: 38 }, (_, i) => i).filter((i) => i % 10 !== 0);

function Timeline() {
  const x = (s: number) => 50.5 + s * 86.3;
  return (
    <section aria-label="时间线" className="relative ml-px min-w-0 flex-1 pr-px">
      <div className="h-[114px] overflow-hidden bg-[linear-gradient(#cdcdcd_30px,transparent_30px)]">
        <svg role="img" aria-label="键码时间线" width="378" height="114" viewBox="0 0 378 114">
          <defs>
            <pattern id="hatch" width="14" height="14" patternUnits="userSpaceOnUse">
              <path d="M-1 15 15-1M-2 2 2-2M12 16l4-4" stroke="#b9b96a" strokeWidth=".9" />
            </pattern>
          </defs>
          <path d="M50 0h259v30H50z" fill="#ffff82" />
          <path d="M50 0h259v30H50z" fill="url(#hatch)" />
          {SECONDS.map((s) => (
            <g key={s}>
              <path d={`M${x(s)} 3v27`} stroke="#6b6b6b" />
              <path d={`M${x(s)} 31v83`} stroke="#cbcbcd" />
              <text
                x={x(s) + 2}
                y="14"
                fill="#6b6b6b"
                className="font-['Noto_Sans','Noto_Sans_CJK_SC',sans-serif] text-xs font-semibold"
              >
                {s} <tspan className="text-[11px]">秒</tspan>
              </text>
            </g>
          ))}
          {TICKS.map((i) => (
            <path key={i} d={`M${50.5 + i * 8.63} ${i % 5 === 0 ? 17 : 21}v${i % 5 === 0 ? 12 : 8}`} stroke="#6b6b6b" />
          ))}
          <path d="M50 41.500h259" stroke="#000" />
          <path d="M82 0v114" stroke="#858585" strokeWidth="2" />
          <path d="m50 32 5 9.500-5 9.500-5-9.500z" fill="#000" />
          <path d="m50 54 5 9.500-5 9.500-5-9.500zM50 97.500l5 9.500-3 7h-4l-3-7z" fill="#858787" />
          <path d="m309 30 6 11.500-6 11.500-6-11.500z" fill="#58a8f5" />
        </svg>
      </div>
      <div className="absolute top-[88px] right-px flex h-[26px] w-[81px] items-center bg-[#cdcdcd]">
        <Tool icon={ZoomFit} label="整屏显示时间线" w="w-[27px]" />
        <Tool icon={ZoomIn} label="放大时间线" w="w-[27px]" />
        <Tool icon={ZoomOut} label="缩小时间线" w="w-[27px]" />
      </div>
      <div className="flex h-[17px] items-center px-1.5">
        <svg aria-hidden="true" width="5" height="7" viewBox="0 0 5 7" fill="#2b2f33">
          <path d="M4 0v7L0 3.500z" />
        </svg>
        <span className="ml-[7px] flex h-[15px] w-[61px] items-center justify-center gap-0.5 rounded-[2px] border border-[#8e8e90] bg-linear-to-b from-[#f4f4f6] from-45% to-[#cfcfd1] to-55%">
          <span className="h-1.5 w-px bg-[#444]" />
          <span className="h-1.5 w-px bg-[#444]" />
          <span className="h-1.5 w-px bg-[#444]" />
        </span>
        <svg aria-hidden="true" width="5" height="7" viewBox="0 0 5 7" fill="#2b2f33" className="ml-auto">
          <path d="M1 0v7l4-3.500z" />
        </svg>
      </div>
    </section>
  );
}

const NAV = [
  { label: "第一个", d: "M1 0h1.500v9H1zM9 0v9L3.500 4.500z" },
  { label: "上一个", d: "M7 0v9L2 4.500z" },
  { label: "下一个", d: "M3 0v9l5-4.500z" },
  { label: "最后一个", d: "M8.500 0H10v9H8.500zM2 0v9l5.500-4.500z" },
];

function BottomTabs() {
  return (
    <div className="flex h-[17px] items-stretch border-b border-[#8a8a8c] text-xs leading-4">
      <div className="flex border-t border-black">
        {NAV.map((n) => (
          <button key={n.label} aria-label={n.label} className="flex w-4 items-center justify-center border border-[#9a9a9c] bg-[#cdcdcd]">
            <svg aria-hidden="true" width="10" height="9" viewBox="0 0 10 9" fill="#98989a">
              <path d={n.d} />
            </svg>
          </button>
        ))}
      </div>
      <div role="tablist" className="flex whitespace-nowrap">
        <button role="tab" className="w-[47px] border-t border-r border-[#8a8a8c] bg-[#cdcdcd] pl-1">
          模型
        </button>
        <button role="tab" className="w-[57px] border-t border-r border-[#8a8a8c] bg-[#cdcdcd]">
          3D 视图
        </button>
        <button role="tab" aria-selected="true" className="w-[79px] pr-3">
          运动算例 1
        </button>
      </div>
      <div className="flex-1 border-t border-l border-[#8a8a8c]" />
    </div>
  );
}

function StatusBar() {
  return (
    <footer className="flex h-[17px] items-center pt-px text-xs leading-4 whitespace-nowrap">
      <span className="ml-0.5">SOLIDWORKS Premium 2019 SP5.0</span>
      <div className="ml-auto flex h-full items-center">
        <span>欠定义</span>
        <span className="ml-[6px] h-full w-[9px] border-x border-[#cbcbcd]" />
        <span className="ml-[3px] w-[82px]">在编辑 装配体</span>
        <span className="h-full w-[17px] border-x border-[#cbcbcd]" />
        <span className="ml-7 text-[#9c9c9e]">自定义</span>
        <span className="ml-3">
          <Caret up />
        </span>
        <span className="ml-[62px]">
          <TagIcon />
        </span>
        <svg aria-hidden="true" width="10" height="10" viewBox="0 0 10 10" fill="#b0b0b2" className="mr-0.5 ml-[10px] self-end">
          <path d="M8 0h2v2H8zM4 4h2v2H4zM8 4h2v2H8zM0 8h2v2H0zM4 8h2v2H4zM8 8h2v2H8z" />
        </svg>
      </div>
    </footer>
  );
}

export default function App() {
  return (
    <div className="flex min-h-screen flex-col bg-[#69737d] font-['Noto_Sans','Noto_Sans_CJK_SC',sans-serif] text-[#111]">
      <div className="h-[9px] rounded-t-lg border-t-2 border-[#55585c] bg-[linear-gradient(90deg,#dde1e8,#eef0f6_30%,#dfe4ee_60%,#f0f1f5_85%,#cdd8e6)]" />
      <div className="flex flex-1">
        <div className="w-[5px] border-r border-[#b9c0c8] bg-[linear-gradient(#d5dae2,#8aa0b4_5%,#5d6d80_9%,#a8aeb0_12%,#5b7052_25%,#49624a_32%,#8e9480_44%,#3f5142_47%,#5b6672_52%,#2f4a2e_60%,#7b8078_67%,#39503a_74%,#3d5069_80%,#3a4c60)]" />
        <div className="flex min-w-0 flex-1 flex-col border-x border-t border-[#4b4e52] bg-[#f4f4f6]">
          <TitleBar />
          <CommandBar />
          <TabRow />
          <Viewport />
          <div className="flex">
            <div className="w-[2px] shrink-0 bg-[#9fb0b6]" />
            <div className="min-w-0 flex-1">
              <MotionToolbar />
              <div className="flex">
                <MotionTree />
                <div className="w-[3px] shrink-0 border-x border-[#4d5578] bg-[#c9ccd8]" />
                <Timeline />
              </div>
              <BottomTabs />
            </div>
            <div className="w-[2px] shrink-0 bg-[#9fb0b6]" />
          </div>
          <StatusBar />
        </div>
        <div className="w-1 border-l border-[#b9c0c8] bg-[linear-gradient(#e6e9f0,#c9ced6_7%,#596778_12%,#a5a9ae_18%,#6c7a5c_28%,#37432f_36%,#4b6340_42%,#d0d2d4_45%,#3f4a55_48%,#596066_57%,#8a8c8e_64%,#2e3a30_72%,#5d7a48_85%,#2d372f)]" />
      </div>
      <div className="h-2 rounded-b-md border-t border-b-2 border-t-[#7e868a] border-b-[#2c3438] bg-[linear-gradient(90deg,#44545e,#7b878f_15%,#dfe6ec_25%,#aab2b4_38%,#333d42_46%,#5e6a70_60%,#38434a_75%,#4f5a55)]" />
    </div>
  );
}
